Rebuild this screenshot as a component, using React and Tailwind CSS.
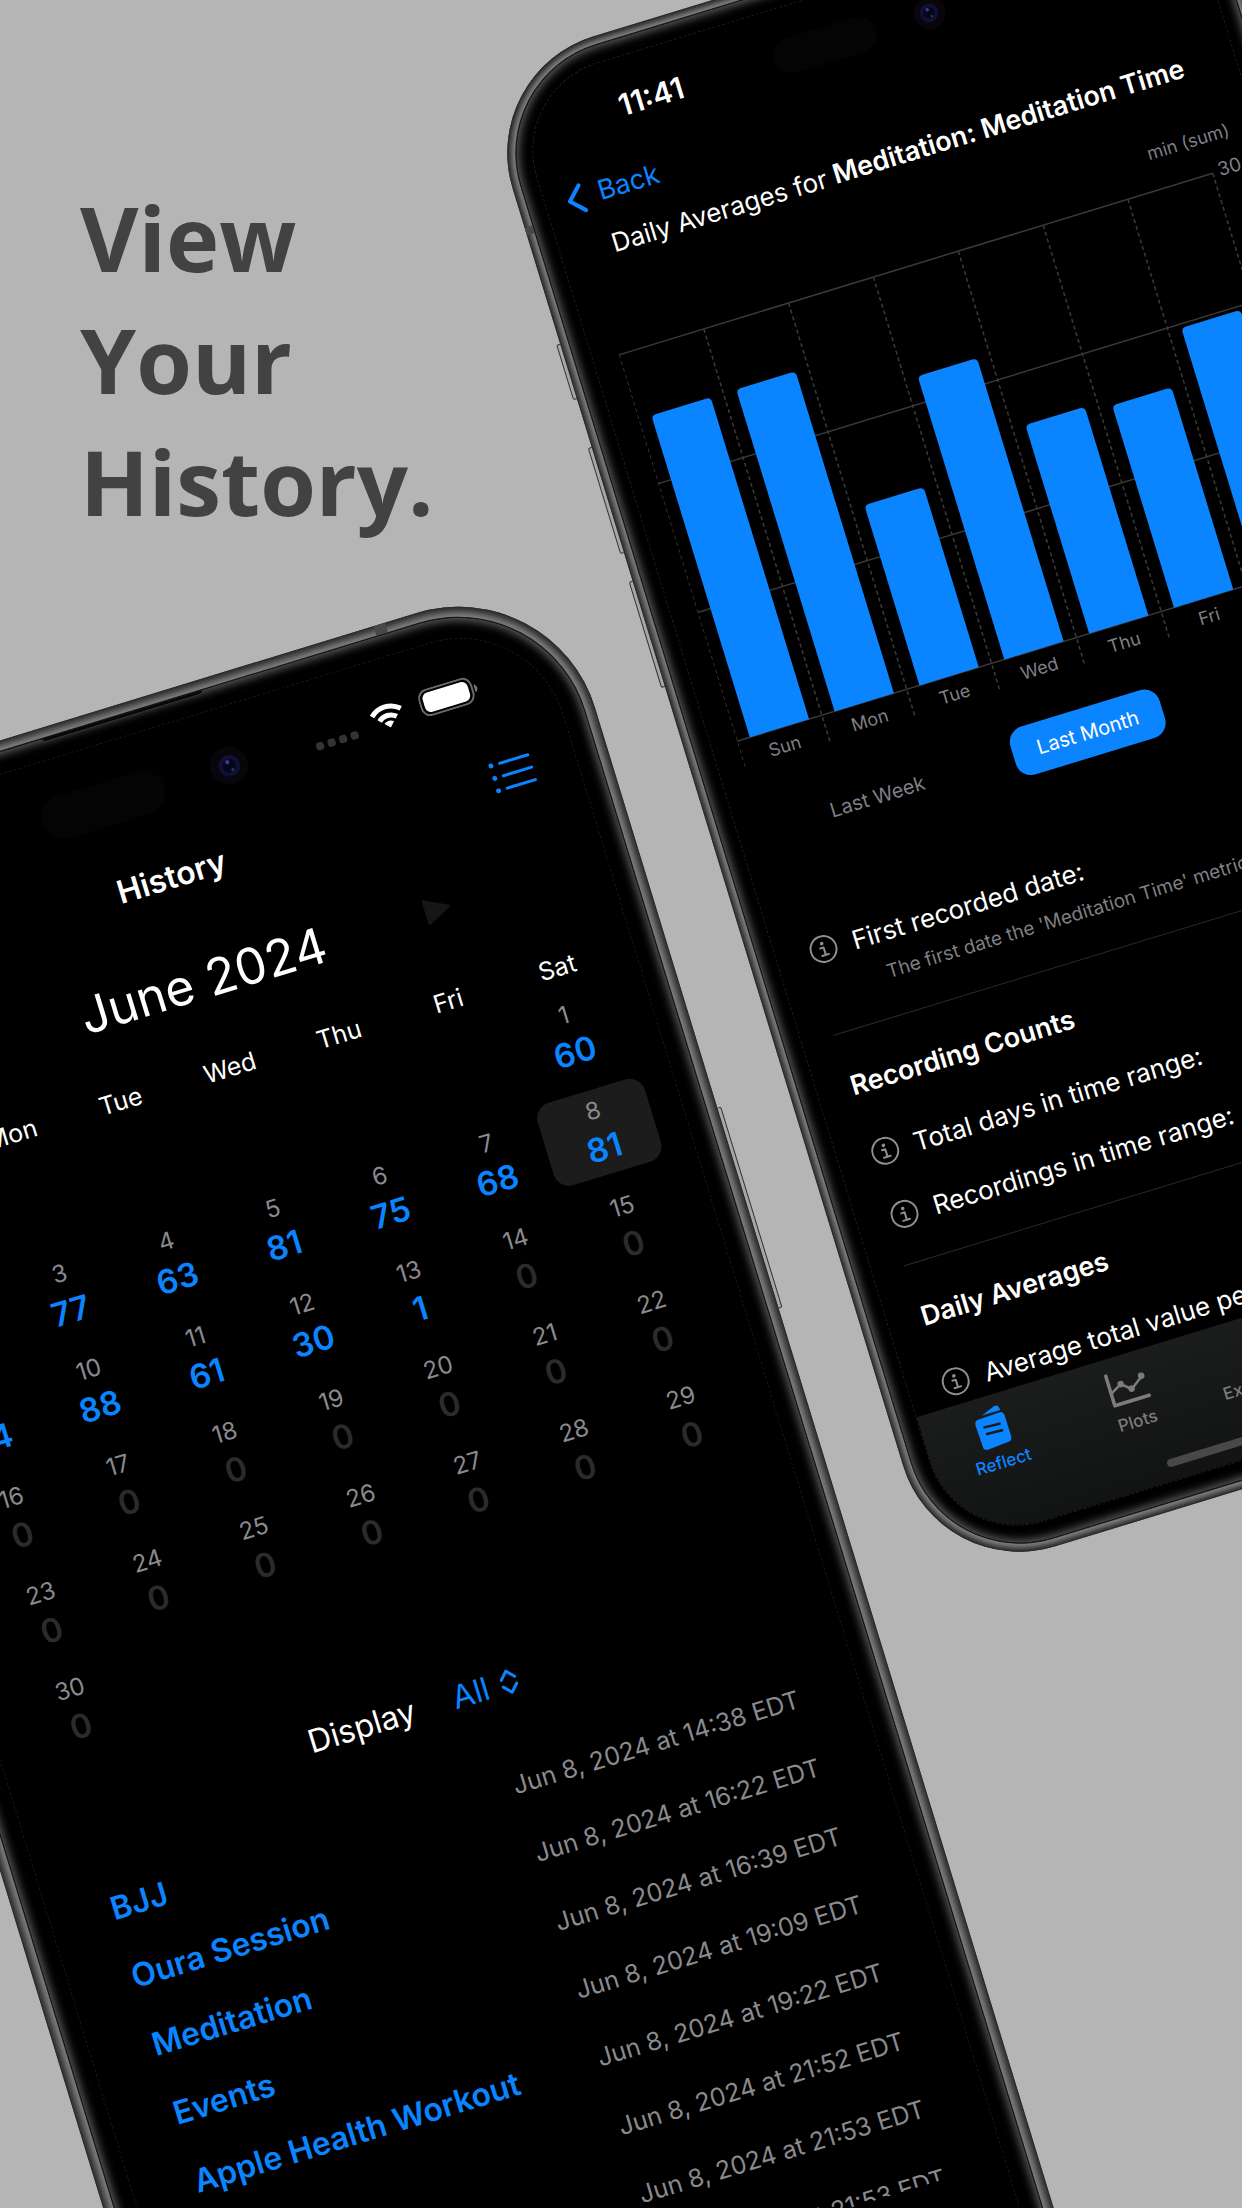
import { useState } from "react";
import clsx from "clsx";

const WEEKDAYS = ["Sun", "Mon", "Tue", "Wed", "Thu", "Fri", "Sat"];

// June 2024 starts on a Saturday
const FIRST_WEEKDAY = 6;
const DAY_SCORES = [60, 70, 77, 63, 81, 75, 68, 81, 74, 88, 61, 30, 1];
const DAYS = Array.from({ length: 30 }, (_, i) => ({ day: i + 1, score: DAY_SCORES[i] ?? 0 }));

const RECORDS = [
  { name: "BJJ", date: "Jun 8, 2024 at 14:38 EDT" },
  { name: "Oura Session", date: "Jun 8, 2024 at 16:22 EDT" },
  { name: "Meditation", date: "Jun 8, 2024 at 16:39 EDT" },
  { name: "Events", date: "Jun 8, 2024 at 19:09 EDT" },
  { name: "Apple Health Workout", date: "Jun 8, 2024 at 19:22 EDT" },
  { name: "", date: "Jun 8, 2024 at 21:52 EDT" },
  { name: "", date: "Jun 8, 2024 at 21:53 EDT" },
  { name: "", date: "Jun 8, 2024 at 21:53 EDT" },
];

const AVERAGES = [25, 25, 14, 22, 16.2, 15.7, 19.7];

const CHART = { top: 13, height: 404, width: 621, barWidth: 62 };

function WifiIcon() {
  return (
    <svg viewBox="0 0 34 25" className="w-[34px] h-[25px]" fill="none" stroke="#fff" strokeWidth="5">
      <path d="M2 9.5C10.500 1.500 23.500 1.500 32 9.500" />
      <path d="M8 16C13 11.200 21 11.200 26 16" />
      <path d="M17 25l-5-5.200c2.900-2.600 7.100-2.600 10 0z" fill="#fff" stroke="none" />
    </svg>
  );
}

function BatteryIcon() {
  return (
    <svg viewBox="0 0 62 28" className="w-[62px] h-7">
      <rect x="1" y="1" width="54" height="26" rx="9" fill="none" stroke="#6a6a6a" strokeWidth="2" />
      <rect x="4.500" y="4" width="47" height="20" rx="6" fill="#fff" />
      <path d="M57.500 10c3.500 1 3.500 7 0 8z" fill="#7a7a7a" />
    </svg>
  );
}

function ListIcon() {
  return (
    <svg viewBox="0 0 44 32" className="w-11 h-8" stroke="#0b84ff" strokeWidth="3" strokeLinecap="round">
      {[3, 16, 29].map((y) => (
        <g key={y}>
          <circle cx="3.500" cy={y} r="1.200" fill="#0b84ff" strokeWidth="2.500" />
          <path d={`M12.500 ${y}H42`} />
        </g>
      ))}
    </svg>
  );
}

function Triangle({ flip }) {
  return (
    <svg viewBox="0 0 27 27" className={clsx("w-[27px] h-[27px]", flip && "rotate-180")}>
      <path d="M1.500 1.500L25.500 13.500L1.500 25.500z" fill="#161616" stroke="#161616" strokeWidth="2" strokeLinejoin="round" />
    </svg>
  );
}

function InfoIcon() {
  return (
    <svg viewBox="0 0 28 28" className="w-7 h-7 shrink-0" fill="none" stroke="#8e8e93" strokeWidth="2">
      <circle cx="14" cy="14" r="13" />
      <circle cx="13.800" cy="8.300" r="1.800" fill="#8e8e93" stroke="none" />
      <path d="M11 12.500h3.500v7.500M10.800 20.300h7" strokeLinecap="round" strokeLinejoin="round" />
    </svg>
  );
}

function ReflectIcon() {
  return (
    <svg viewBox="0 0 36 42" className="w-9 h-[42px]">
      <path d="M11 6.500L25.500 1q3-.5 4 2l.8 3.500z" fill="#0b84ff" />
      <path d="M5.500 9.500l23-1q4 0 4.300 4l.2 22q0 4-3.500 4.800l-22 1.700q-4.500 0-4.700-4.500l-.8-22q0-4.500 3.500-5z" fill="#0b84ff" />
      <path d="M10 18.500l15.500 1M10.500 25.500l15.500 1" stroke="#1a1b1b" strokeWidth="2.500" strokeLinecap="round" />
    </svg>
  );
}

function PlotsIcon() {
  return (
    <svg viewBox="0 0 42 36" className="w-[42px] h-9" fill="none" stroke="#7c7c7c" strokeLinecap="round">
      <path d="M3 2v31h36" strokeWidth="3.500" strokeLinejoin="round" />
      <path d="M4 20l11-6 9 8L38 12" strokeWidth="2.500" />
      <g fill="#7c7c7c" stroke="none">
        <circle cx="15" cy="14" r="3.300" />
        <circle cx="24" cy="21.500" r="3.300" />
        <circle cx="37" cy="12" r="3.300" />
      </g>
    </svg>
  );
}

function FlaskIcon() {
  return (
    <svg viewBox="0 0 36 40" className="w-9 h-10" fill="none" stroke="#7c7c7c" strokeWidth="3" strokeLinecap="round" strokeLinejoin="round">
      <path d="M9 3h18M13 3v12L4 32q-2 5 3 5h22q5 0 3-5l-9-17V3" />
    </svg>
  );
}

function Lens({ className }) {
  return (
    <span className={clsx("absolute flex items-center justify-center rounded-full bg-[#08060a]", className)}>
      <svg viewBox="0 0 22 22" className="w-3/5 h-3/5">
        <circle cx="11" cy="11" r="10.500" fill="#101034" />
        <circle cx="11" cy="11" r="6.500" fill="#05051c" />
        <circle cx="10" cy="7" r="2" fill="#3c3c82" />
        <circle cx="13" cy="15.500" r="1.500" fill="#134652" />
      </svg>
    </span>
  );
}

function HistoryScreen() {
  const [selected, setSelected] = useState(8);

  return (
    <div className="relative h-[1831px] w-[845px] flex flex-col rounded-[108px] border border-dashed border-[#1a1a1a] bg-black text-white">
      <span className="absolute left-[314px] top-[37px] w-[127px] h-11 rounded-full bg-[#040404]" />
      <Lens className="left-[490px] top-[39px] w-[38px] h-[38px]" />

      <div className="h-28 flex items-center justify-end pr-[72px]">
        <div className="flex gap-[4px] mr-[16px] mt-5">
          {[0, 1, 2, 3].map((i) => (
            <span key={i} className="w-2 h-2 rounded-[3px] bg-[#333]" />
          ))}
        </div>
        <WifiIcon />
        <span className="w-[17px]" />
        <BatteryIcon />
      </div>

      <header className="h-[72px] grid grid-cols-3 items-center px-[43px]">
        <h2 className="col-start-2 text-center text-[32px] font-semibold">History</h2>
        <button type="button" aria-label="Show list" className="justify-self-end">
          <ListIcon />
        </button>
      </header>

      <div className="h-36 w-[517px] self-center flex items-center justify-between">
        <button type="button" aria-label="Previous month">
          <Triangle flip />
        </button>
        <h3 className="text-[50px] whitespace-nowrap">June 2024</h3>
        <button type="button" aria-label="Next month">
          <Triangle />
        </button>
      </div>

      <div className="h-10 grid grid-cols-7 items-center px-[22px] text-center text-[25px]">
        {WEEKDAYS.map((day) => (
          <span key={day}>{day}</span>
        ))}
      </div>

      <div className="mt-[6px] grid grid-cols-7 gap-y-[14px] px-[31px]">
        {DAYS.map(({ day, score }, i) => (
          <button
            key={day}
            type="button"
            onClick={() => setSelected(day)}
            className={clsx(
              "h-[86px] pt-2 flex flex-col items-center rounded-[16px]",
              selected === day && "bg-[#1c1c1c]"
            )}
            style={i === 0 ? { gridColumnStart: FIRST_WEEKDAY + 1 } : undefined}
          >
            <span className="text-[24px] leading-[26px] text-[#8a8a8e]">{day}</span>
            <span
              className={clsx(
                "text-[33px] leading-[50px] font-semibold",
                score > 0 ? "text-[#0b84ff]" : "text-[#2b2b2b]"
              )}
            >
              {score}
            </span>
          </button>
        ))}
      </div>

      <div className="h-[111px] flex items-center justify-center gap-10 pr-[25px] text-[32px]">
        <label htmlFor="display">Display</label>
        <div className="flex items-center gap-3 text-[#0b84ff]">
          <select id="display" className="appearance-none bg-transparent">
            <option>All</option>
          </select>
          <svg viewBox="0 0 18 26" className="w-[18px] h-[26px]" fill="none" stroke="#0b84ff" strokeWidth="3" strokeLinecap="round" strokeLinejoin="round">
            <path d="M2 9.500L9 2l7 7.500M2 16.500L9 24l7-7.500" />
          </svg>
        </div>
      </div>

      <div className="mt-[11px] h-[537px] overflow-hidden">
        <ul className="h-[571px] grid auto-rows-fr px-[62px]">
          {RECORDS.map((record, i) => (
            <li key={i} className="flex items-center justify-between whitespace-nowrap">
              <a href="#" className="text-[32px] font-semibold text-[#0b84ff]">
                {record.name}
              </a>
              <span className="text-[25px] text-[#8a8a8e]">{record.date}</span>
            </li>
          ))}
        </ul>
      </div>
    </div>
  );
}

function AveragesChart() {
  const { top, height, width, barWidth } = CHART;
  const bottom = top + height;
  const step = width / 7;

  return (
    <svg viewBox="0 0 677 448" className="mt-3 ml-[26px] w-[677px] h-[448px]">
      {[30, 20, 10, 0].map((tick) => {
        const y = bottom - (tick / 30) * height;
        return (
          <g key={tick}>
            <path d={`M0 ${y}H${width}`} stroke="#3a3a3c" strokeWidth="1.500" />
            <text x="627" y={y + 5} className="text-[19px]" fill="#7f7f84">
              {tick}
            </text>
          </g>
        );
      })}
      {Array.from({ length: 8 }, (_, i) => (
        <path key={i} d={`M${i * step} ${top}V447`} stroke="#3a3a3c" strokeWidth="1.500" strokeDasharray="4 3" />
      ))}
      {AVERAGES.map((value, i) => {
        const x = i * step + (step - barWidth) / 2;
        const y = bottom - (value / 30) * height;
        return (
          <g key={i}>
            <path
              d={`M${x} ${bottom}V${y + 5}q0-5 5-5H${x + barWidth - 5}q5 0 5 5V${bottom}z`}
              fill="#0b84ff"
            />
            <text x={(i + 0.5) * step} y="442" textAnchor="middle" className="text-[18px]" fill="#7f7f84">
              {WEEKDAYS[i]}
            </text>
          </g>
        );
      })}
    </svg>
  );
}

function InfoRow({ children, className = "h-[66px]" }) {
  return (
    <div className={clsx("flex items-center gap-4 px-[34px] text-[26px] whitespace-nowrap", className)}>
      <InfoIcon />
      <span>{children}</span>
    </div>
  );
}

function SectionTitle({ children }) {
  return (
    <h3 className="h-[92px] pt-4 px-[34px] flex items-center text-[27px] font-semibold whitespace-nowrap">
      {children}
    </h3>
  );
}

function Tab({ icon, label, active }) {
  return (
    <button
      type="button"
      className={clsx(
        "pt-[10px] flex flex-col items-center text-[17px] leading-[20px] font-medium",
        active ? "text-[#0b84ff]" : "text-[#7c7c7c]"
      )}
    >
      <span className="h-[44px] flex items-center">{icon}</span>
      <span className="mt-1">{label}</span>
    </button>
  );
}

function ReflectScreen() {
  const [range, setRange] = useState("Last Month");

  return (
    <div className="relative h-[1526px] w-[704px] flex flex-col overflow-hidden rounded-[92px] border border-dashed border-[#202020] bg-black text-white">
      <span className="absolute left-[261px] top-[31px] w-[106px] h-9 rounded-full bg-[#040404]" />
      <Lens className="left-[407px] top-[33px] w-8 h-8" />

      <div className="h-[95px] flex items-center pl-[99px] text-[30px] font-semibold">11:41</div>

      <div className="h-[57px] flex items-center pl-5">
        <button type="button" className="flex items-center gap-[14px] text-[27px] text-[#0b84ff]">
          <svg viewBox="0 0 20 32" className="w-5 h-8" fill="none" stroke="#0b84ff" strokeWidth="4" strokeLinecap="round" strokeLinejoin="round">
            <path d="M17 3L4 16l13 13" />
          </svg>
          Back
        </button>
      </div>

      <h2 className="h-12 flex items-center justify-center text-[26px] whitespace-pre">
        Daily Averages for <b className="text-[27px] font-semibold">Meditation: Meditation Time</b>
      </h2>

      <p className="mt-9 pr-[27px] text-right text-[18px] leading-[24px] text-[#7f7f84]">min (sum)</p>
      <AveragesChart />

      <div className="mt-[38px] ml-[70px] flex gap-[68px] whitespace-nowrap">
        {["Last Week", "Last Month", "Last Year"].map((label) => (
          <button
            key={label}
            type="button"
            onClick={() => setRange(label)}
            className={clsx(
              "h-[50px] px-[25px] rounded-[16px] text-[20px]",
              range === label ? "bg-[#0b84ff] text-white" : "text-[#7f7f84]"
            )}
          >
            {label}
          </button>
        ))}
      </div>

      <InfoRow className="mt-[74px] h-[62px]">First recorded date:</InfoRow>
      <p className="pl-[102px] text-[19px] leading-[20px] text-[#7f7f84] whitespace-nowrap">
        The first date the 'Meditation Time' metric was recorded.
      </p>

      <hr className="mt-[34px] ml-8 border-[#2a2a2c]" />
      <SectionTitle>Recording Counts</SectionTitle>
      <InfoRow>Total days in time range:</InfoRow>
      <InfoRow>Recordings in time range:</InfoRow>

      <hr className="mt-4 ml-8 border-[#2a2a2c]" />
      <SectionTitle>Daily Averages</SectionTitle>
      <InfoRow>Average total value per day:</InfoRow>

      <nav className="absolute inset-x-0 bottom-0 h-[136px] grid grid-cols-5 content-start bg-linear-to-b from-[#1b1c1c] to-[#121413]">
        <Tab icon={<ReflectIcon />} label="Reflect" active />
        <Tab icon={<PlotsIcon />} label="Plots" />
        <Tab icon={<FlaskIcon />} label="Experiments" />
        <span className="absolute bottom-[14px] left-1/2 -ml-[125px] w-[250px] h-2 rounded-full bg-[#484848]" />
      </nav>
    </div>
  );
}

export default function App() {
  return (
    <main className="relative min-h-screen overflow-hidden bg-[#b5b5b5] font-['Inter',sans-serif]">
      <h1 className="pt-[176px] pl-[80px] font-['Open_Sans',sans-serif] text-[90px] leading-[122px] font-bold text-[#424242]">
        View
        <br />
        Your
        <br />
        History.
      </h1>

      <section className="absolute left-[-316px] top-[837px] origin-top-left -rotate-[17deg]">
        <span className="absolute -right-[4px] top-[561px] w-2 h-[210px] rounded-[2px] border border-[#333] bg-[#a8a8a2]" />
        <div className="relative rounded-[143px] bg-[#808080] p-[10px] shadow-[inset_0_0_0_1px_#2c2c2c,inset_0_0_6px_5px_#2a2a2a]">
          <span className="absolute right-[176px] top-0 w-3 h-[10px] bg-[#484848]" />
          <div className="rounded-[133px] border border-[#161616] bg-black p-[21px] shadow-[inset_0_0_9px_3px_#5a5a5a]">
            <span className="absolute left-[371px] top-[11px] w-[167px] h-1 rounded-b-[4px] border-b border-[#3a3a3a] bg-[#080808]" />
            <HistoryScreen />
          </div>
        </div>
      </section>

      <section className="absolute left-[477px] top-[72px] origin-top-left -rotate-[17deg]">
        <span className="absolute -left-[4px] top-[284px] w-2 h-[58px] rounded-[2px] border border-[#333] bg-[#a8a8a2]" />
        <span className="absolute -left-[4px] top-[392px] w-2 h-[111px] rounded-[2px] border border-[#333] bg-[#a8a8a2]" />
        <span className="absolute -left-[4px] top-[532px] w-2 h-[111px] rounded-[2px] border border-[#333] bg-[#a8a8a2]" />
        <div className="relative rounded-[122px] bg-[#808080] p-[8px] shadow-[inset_0_0_0_1px_#2c2c2c,inset_0_0_5px_4px_#2a2a2a]">
          <span className="absolute left-0 top-[163px] w-2 h-2 bg-[#484848]" />
          <div className="rounded-[114px] border border-[#161616] bg-black px-[17px] pt-[17px] pb-[18px] shadow-[inset_0_0_8px_3px_#5a5a5a]">
            <ReflectScreen />
          </div>
        </div>
      </section>
    </main>
  );
}
